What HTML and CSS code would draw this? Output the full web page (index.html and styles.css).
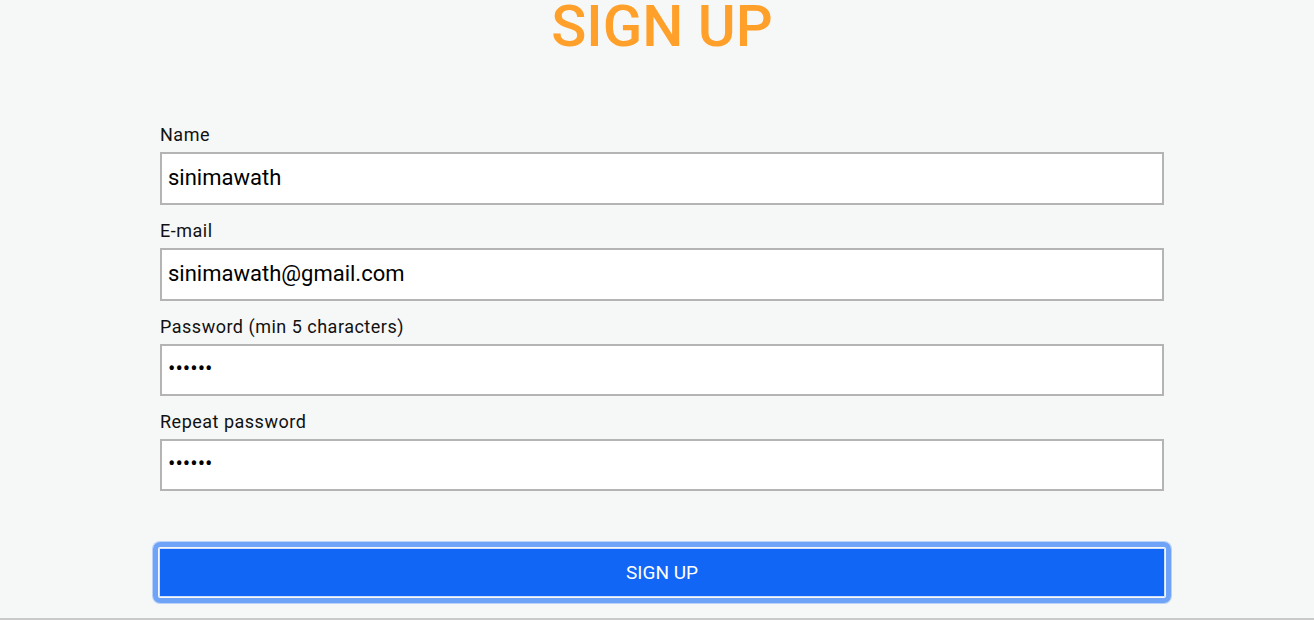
FILE: index.html
```html
<!DOCTYPE html>
<html lang="en">
<head>
    <meta charset="UTF-8">
    <meta name="viewport" content="width=device-width, initial-scale=1.0">
    <title>Sign up</title>
    <link rel="stylesheet" href="styles.css">
</head>
<body>
    <div class="page">
        <h1 class="title">SIGN UP</h1>

        <form class="signup-form">
            <div class="field">
                <label for="name">Name</label>
                <input id="name" type="text" value="sinimawath">
            </div>
            <div class="field">
                <label for="email">E-mail</label>
                <input id="email" type="email" value="sinimawath@gmail.com">
            </div>
            <div class="field">
                <label for="password">Password (min 5 characters)</label>
                <input id="password" type="password" value="secret">
            </div>
            <div class="field">
                <label for="repeat">Repeat password</label>
                <input id="repeat" type="password" value="secret">
            </div>

            <button type="submit" class="submit-btn">SIGN UP</button>
        </form>
    </div>
    <div class="page-bottom"></div>
</body>
</html>
```

FILE: styles.css
```css
body {
    margin: 0;
    font-family: Roboto, 'Liberation Sans', sans-serif;
    background: #f6f7f7;
    color: #111;
}
.page {
    width: 1004px;
    margin-left: 160px;
}
.title {
    margin: 0;
    font-size: 58px;
    line-height: 53px;
    font-weight: 500;
    color: #ffa02b;
    text-align: center;
}
.signup-form {
    margin-top: 72px;
}
.field {
    margin-bottom: 16px;
}
.field label {
    display: block;
    font-size: 18px;
    line-height: 20px;
    letter-spacing: 0.5px;
    margin-bottom: 7px;
}
.field input {
    display: block;
    box-sizing: border-box;
    width: 100%;
    height: 53px;
    padding: 0 6px 3px;
    border: 2px solid #b4b4b4;
    background: #fff;
    font-family: inherit;
    font-size: 22px;
    color: #000;
    outline: none;
}
.field:nth-child(3) input,
.field:nth-child(4) input {
    height: 52px;
}
.submit-btn {
    position: relative;
    display: block;
    box-sizing: border-box;
    width: 1006px;
    height: 49px;
    margin: 57px 0 0 -1px;
    border: 1px solid #cfe0fc;
    background: #1166f6;
    color: #fff;
    font-family: inherit;
    font-size: 19px;
    cursor: pointer;
}
.submit-btn::before {
    content: "";
    position: absolute;
    inset: -7px;
    border: 5px solid #6ea3f7;
    border-radius: 7px;
    box-shadow: 0 0 0 1px #b9d2fa;
    pointer-events: none;
}
.page-bottom {
    margin-top: 21px;
    border-top: 2px solid #cacaca;
}
```
